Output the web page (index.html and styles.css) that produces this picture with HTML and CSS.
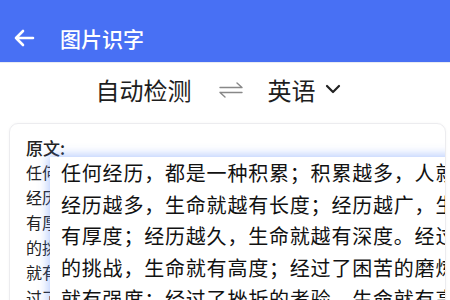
FILE: index.html
```html
<!DOCTYPE html>
<html lang="zh">
<head>
<meta charset="utf-8">
<link rel="stylesheet" href="styles.css">
</head>
<body>
<header class="bar">
  <svg class="back" width="24" height="24" viewBox="0 0 24 24"><path d="M21 12H4M11 5l-7 7 7 7" fill="none" stroke="#fff" stroke-width="2.6" stroke-linecap="round" stroke-linejoin="round"/></svg>
  <span class="title">图片识字</span>
</header>
<div class="langs">
  <span class="lang">自动检测</span>
  <svg class="swap" width="24" height="16" viewBox="0 0 24 16"><path d="M1 5.5h22M23 5.5l-5-4.5M23 10.5H1M1 10.5l5 4.5" fill="none" stroke="#888" stroke-width="1.4" stroke-linecap="round"/></svg>
  <span class="lang">英语</span>
  <svg class="chev" width="16" height="10" viewBox="0 0 16 10"><path d="M2 2l6 6 6-6" fill="none" stroke="#222" stroke-width="2.2" stroke-linecap="round" stroke-linejoin="round"/></svg>
</div>
<main class="card">
  <div class="label">原文:</div>
  <div class="text">
    <div class="line">任何经历，都是一种积累；积累越多，人就越成熟；</div>
    <div class="line">经历越多，生命就越有长度；经历越广，生命就越</div>
    <div class="line">有厚度；经历越久，生命就越有深度。经过了风雨</div>
    <div class="line">的挑战，生命就有高度；经过了困苦的磨炼，生命</div>
    <div class="line">就有强度；经过了挫折的考验，生命就有高度；经</div>
    <div class="line">过了岁月的沉淀，生命就有厚度。</div>
  </div>
  <div class="magnifier">
    <div class="mline">任何经历，都是一种积累；积累越多，人就越成熟；</div>
    <div class="mline">经历越多，生命就越有长度；经历越广，生命就越</div>
    <div class="mline">有厚度；经历越久，生命就越有深度。经过了风雨</div>
    <div class="mline">的挑战，生命就有高度；经过了困苦的磨炼，生命</div>
    <div class="mline">就有强度；经过了挫折的考验，生命就有高度；经</div>
  </div>
</main>
</body>
</html>
```
FILE: styles.css
```css
* { box-sizing: border-box; }
html, body { margin: 0; padding: 0; }
body {
  width: 450px;
  height: 300px;
  overflow: hidden;
  background: #fff;
  font-family: "Noto Sans CJK SC", "Noto Sans", sans-serif;
  color: #222;
}
.bar {
  height: 63px;
  background: #4870f4;
  display: flex;
  align-items: center;
  padding: 14px 0 0 12px;
  border-bottom: 1px solid #e8ebf2;
}
.back { display: block; }
.title {
  color: #fff;
  font-size: 21px;
  font-weight: 500;
  margin-left: 24px;
  line-height: 1;
}
.langs {
  height: 56px;
  display: flex;
  align-items: center;
  justify-content: center;
  padding: 0 14px 2px 0;
}
.lang {
  font-size: 24px;
  line-height: 1;
  color: #1e1e1e;
}
.swap { margin: 0 25px 0 27px; }
.chev { margin-left: 9px; margin-top: -2px; }
.card {
  position: relative;
  margin: 4px 4px 0 9px;
  height: 200px;
  border: 1px solid #ececef;
  border-radius: 9px;
  padding: 12px 0 0 16px;
  overflow: hidden;
  box-shadow: 0 0 3px rgba(0,0,0,0.04);
}
.label {
  font-size: 17px;
  line-height: 24px;
  font-weight: 500;
}
.text { font-size: 16px; }
.line {
  line-height: 25px;
  white-space: nowrap;
}
.magnifier {
  position: absolute;
  left: 40px;
  top: 33px;
  width: 420px;
  height: 200px;
  background: #fff;
  padding-left: 11px;
  box-shadow: -2px -2px 10px rgba(90,140,250,0.45);
  font-size: 20px;
  letter-spacing: 0.8px;
  color: #111;
}
.mline {
  line-height: 31.5px;
  white-space: nowrap;
}
```
